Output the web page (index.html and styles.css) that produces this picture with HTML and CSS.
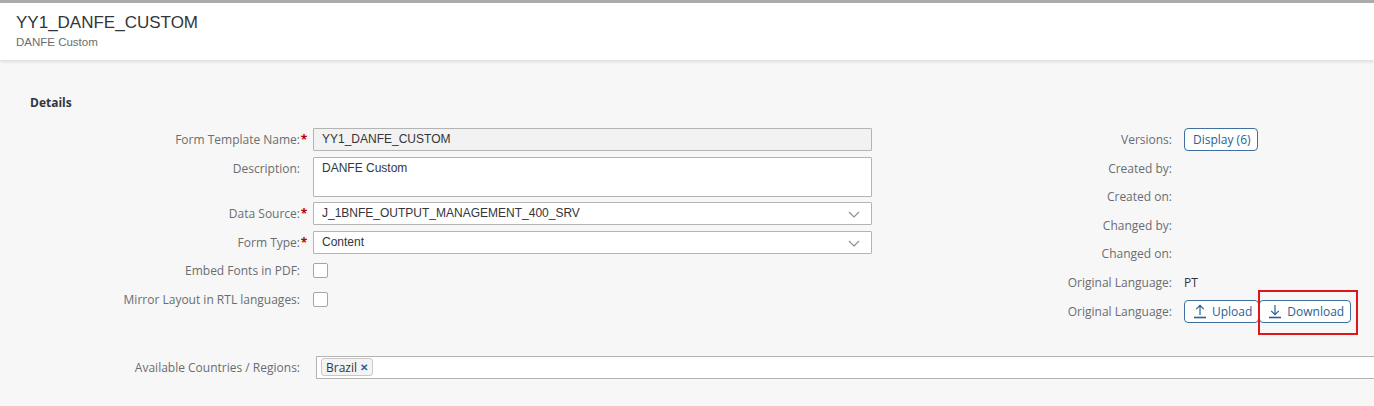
FILE: index.html
```html
<!DOCTYPE html>
<html>
<head>
<meta charset="utf-8">
<link rel="stylesheet" href="styles.css">
</head>
<body>
<div class="topline"></div>
<header class="header">
  <div class="title">YY1_DANFE_CUSTOM</div>
  <div class="subtitle">DANFE Custom</div>
</header>
<main class="page">
  <div class="section-title">Details</div>
  <div class="columns">
    <div class="form">
      <div class="label">Form Template Name:<span class="req">*</span></div>
      <div class="input readonly">YY1_DANFE_CUSTOM</div>

      <div class="label top">Description:<span class="req"></span></div>
      <div class="input area">DANFE Custom</div>

      <div class="label">Data Source:<span class="req">*</span></div>
      <div class="input select">J_1BNFE_OUTPUT_MANAGEMENT_400_SRV
        <svg class="chev" width="12" height="7" viewBox="0 0 12 7"><path d="M1 1 L6 6 L11 1" fill="none" stroke="#8a8d90" stroke-width="1.1"/></svg>
      </div>

      <div class="label">Form Type:<span class="req">*</span></div>
      <div class="input select">Content
        <svg class="chev" width="12" height="7" viewBox="0 0 12 7"><path d="M1 1 L6 6 L11 1" fill="none" stroke="#8a8d90" stroke-width="1.1"/></svg>
      </div>

      <div class="label">Embed Fonts in PDF:<span class="req"></span></div>
      <div class="checkrow"><span class="checkbox"></span></div>

      <div class="label">Mirror Layout in RTL languages:<span class="req"></span></div>
      <div class="checkrow"><span class="checkbox"></span></div>
    </div>

    <div class="side">
      <div class="slabel">Versions:</div>
      <div class="sval"><span class="btn">Display (6)</span></div>

      <div class="slabel">Created by:</div>
      <div class="sval"></div>

      <div class="slabel">Created on:</div>
      <div class="sval"></div>

      <div class="slabel">Changed by:</div>
      <div class="sval"></div>

      <div class="slabel">Changed on:</div>
      <div class="sval"></div>

      <div class="slabel">Original Language:</div>
      <div class="sval text">PT</div>

      <div class="slabel">Original Language:</div>
      <div class="sval">
        <span class="btn icon-btn">
          <svg width="14" height="16" viewBox="0 0 14 16"><path d="M7 2.5 V12 M3.2 6.2 L7 2.4 L10.8 6.2" fill="none" stroke="#2a5f93" stroke-width="1.2"/><path d="M1 14.5 H13" stroke="#2a5f93" stroke-width="1.6"/></svg>
          Upload
        </span>
        <span class="btn icon-btn highlight">
          <svg width="14" height="16" viewBox="0 0 14 16"><path d="M7 2 V11.5 M3.2 7.8 L7 11.6 L10.8 7.8" fill="none" stroke="#2a5f93" stroke-width="1.2"/><path d="M1 14.5 H13" stroke="#2a5f93" stroke-width="1.6"/></svg>
          Download
          <span class="redbox"></span>
        </span>
      </div>
    </div>
  </div>

  <div class="countries">
    <div class="label">Available Countries / Regions:<span class="req"></span></div>
    <div class="input multi"><span class="token">Brazil <span class="x">✕</span></span></div>
  </div>
</main>
</body>
</html>
```
FILE: styles.css
```css
html, body {
  margin: 0;
  padding: 0;
}
body {
  background: #f7f7f7;
  overflow: hidden;
  width: 1374px;
  height: 406px;
  font-family: "Open Sans", "Noto Sans", sans-serif;
  color: #32363a;
}
.topline {
  height: 3px;
  background: #ababab;
}
.header {
  background: #fff;
  padding: 9px 16px 10px;
  box-shadow: 0 2px 3px rgba(0,0,0,0.10);
  position: relative;
}
.title {
  font-family: "Liberation Sans", Arial, sans-serif;
  font-size: 17px;
  line-height: 21px;
  color: #32363a;
}
.subtitle {
  font-family: "Liberation Sans", Arial, sans-serif;
  font-size: 11.5px;
  line-height: 15px;
  margin-top: 2px;
  color: #6a6d70;
}
.page {
  padding-left: 30px;
}
.section-title {
  margin-top: 35px;
  font-size: 12px;
  font-weight: 700;
  line-height: 16px;
  color: #32363a;
}
.columns {
  display: flex;
  margin-top: 17px;
}
.form {
  display: grid;
  grid-template-columns: 278px 559px;
  grid-template-rows: 23px 40px 23px 23px 23px 23px;
  column-gap: 5px;
  row-gap: 5.6px;
  width: 842px;
  align-items: center;
}
.label {
  font-size: 12px;
  height: 23px;
  line-height: 23px;
  color: #6a6d70;
  text-align: right;
  white-space: nowrap;
  overflow: visible;
}
.label.top {
  align-self: start;
}
.req {
  display: inline-block;
  width: 8px;
  height: 23px;
  vertical-align: top;
  text-align: center;
  color: #bb0000;
  font-weight: 700;
}
.input {
  box-sizing: border-box;
  height: 23px;
  border: 1px solid #b4b4b4;
  border-radius: 1px;
  background: #fff;
  font-family: "Liberation Sans", Arial, sans-serif;
  font-size: 12px;
  line-height: 21px;
  padding-left: 8px;
  color: #32363a;
  position: relative;
}
.input.readonly {
  background: #f2f2f2;
}
.input.area {
  height: 40px;
  line-height: 15px;
  padding-top: 3px;
}
.chev {
  position: absolute;
  right: 11px;
  top: 8px;
}
.checkrow {
  height: 23px;
  display: flex;
  align-items: center;
}
.checkbox {
  box-sizing: border-box;
  width: 15px;
  height: 15px;
  border: 1px solid #a5a5a5;
  border-radius: 2px;
  background: #fff;
}
.side {
  display: grid;
  grid-template-columns: 300px auto;
  column-gap: 12px;
  row-gap: 5.6px;
  grid-auto-rows: 23px;
  align-items: center;
  align-content: start;
}
.slabel {
  font-size: 12px;
  color: #6a6d70;
  text-align: right;
  line-height: 23px;
  white-space: nowrap;
}
.sval {
  display: flex;
  height: 23px;
  align-items: center;
}
.sval.text {
  font-size: 12px;
  color: #32363a;
}
.btn {
  box-sizing: border-box;
  height: 23px;
  display: inline-flex;
  align-items: center;
  border: 1px solid #3f6f9f;
  border-radius: 4px;
  background: #fff;
  color: #2a5f93;
  font-size: 12px;
  padding: 0 6px 0 8px;
  white-space: nowrap;
  position: relative;
}
.icon-btn {
  padding: 0 6px 0 8px;
}
.icon-btn svg {
  margin-right: 5px;
}
.redbox {
  position: absolute;
  left: -2px;
  top: -11px;
  width: 100px;
  height: 45px;
  box-sizing: border-box;
  border: 2px solid #e0161c;
  pointer-events: none;
}
.countries {
  display: grid;
  grid-template-columns: 278px 1070px;
  column-gap: 8px;
  margin-top: 33px;
  align-items: center;
}
.input.multi {
  border-right: none;
  padding-left: 4px;
  display: flex;
  align-items: center;
}
.token {
  box-sizing: border-box;
  height: 18px;
  display: inline-flex;
  align-items: center;
  border: 1px solid #c8c8c8;
  border-radius: 3px;
  background: #f4f4f4;
  font-family: "Open Sans", sans-serif;
  font-size: 12px;
  color: #32363a;
  padding: 0 4px;
}
.x {
  color: #2a5f93;
  font-size: 10px;
  line-height: 14px;
  font-weight: 700;
  margin-left: 3px;
}
```
